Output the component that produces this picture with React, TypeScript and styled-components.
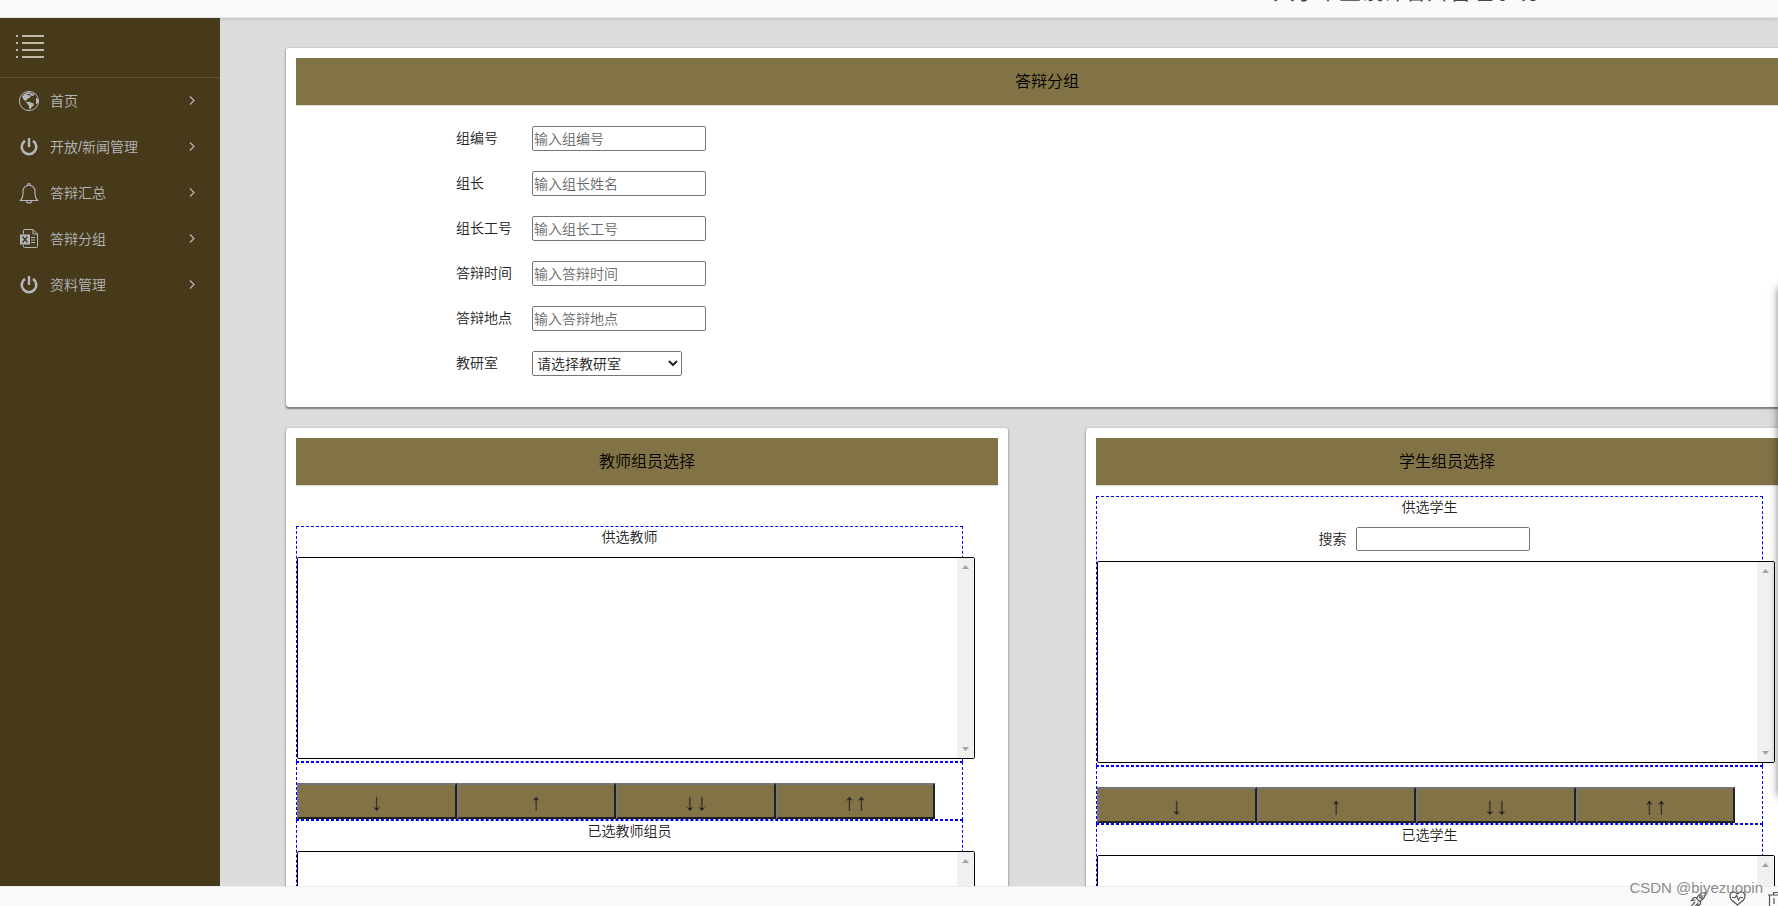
import React from 'react';
import styled, { createGlobalStyle } from 'styled-components';

const GlobalStyle = createGlobalStyle`
  * { box-sizing: border-box; }
  body {
    margin: 0;
    overflow: hidden;
    color: #222;
    font: 350 14px/20px "Liberation Sans", "Noto Sans CJK SC", sans-serif;
  }
  button, input, select { font: inherit; color: inherit; }
`;

const Page = styled.div`
  position: relative;
  display: flex;
  flex-direction: column;
  height: 100vh;
  overflow: hidden;
`;

const TopBar = styled.header`
  position: relative;
  z-index: 1;
  flex: none;
  display: flex;
  justify-content: center;
  align-items: flex-end;
  height: 18px;
  padding-left: 1032px;
  padding-bottom: 13px;
  background: linear-gradient(#fbfbfb, #f8f8f8);
  border-bottom: 1px solid #e4e4e4;
  box-shadow: 0 1px 4px rgba(0, 0, 0, 0.14);
`;

const SystemTitle = styled.h1`
  margin: 0;
  color: #444;
  font-size: 22px;
  font-weight: 400;
  line-height: 24px;
  white-space: nowrap;
`;

const Body = styled.div`
  flex: 1;
  display: flex;
  min-height: 0;
`;

const Sidebar = styled.nav`
  position: relative;
  z-index: 2;
  flex: none;
  width: 220px;
  background: #463a1a;
`;

const MenuToggle = styled.button`
  display: flex;
  width: 100%;
  height: 60px;
  padding: 16px;
  border: 0;
  border-bottom: 1px solid #5b5030;
  background: none;
`;

const MenuList = styled.ul`
  margin: 0;
  padding: 0;
  list-style: none;
`;

const MenuLink = styled.a`
  display: flex;
  align-items: center;
  gap: 10px;
  height: 46px;
  padding: 0 24px 0 18px;
  color: #b5b8bb;
  text-decoration: none;
  svg { flex: none; }
  span { flex: 1; }
`;

const Main = styled.main`
  flex: 1;
  min-width: 0;
  overflow: hidden;
  background: #dcdcdc;
`;

const Content = styled.div`
  display: flex;
  flex-direction: column;
  gap: 21px;
  margin: 30px -30px 0 66px;
`;

const Card = styled.section`
  padding: 10px;
  background: #fff;
  border-radius: 3px;
  box-shadow: 0 1px 2px 1px rgba(0, 0, 0, 0.22), 0 2px 1px rgba(0, 0, 0, 0.25);
`;

const CardTitle = styled.h2`
  display: flex;
  align-items: center;
  justify-content: center;
  height: 48px;
  margin: 0;
  color: #000;
  background: #817345;
  border-bottom: 1px solid #ddd;
  font-size: 16px;
  font-weight: 350;
`;

const Form = styled.form`
  display: flex;
  flex-direction: column;
  gap: 20px;
  padding: 20px 0 21px 160px;
`;

const Field = styled.div`
  display: flex;
  height: 25px;
  label { width: 76px; line-height: 24px; }
`;

const TextInput = styled.input`
  width: 174px;
  height: 25px;
  padding: 1px;
  background: #fff;
  border: 1px solid #767676;
  border-radius: 2px;
  &::placeholder { color: #696969; opacity: 1; }
`;

const Dropdown = styled.select`
  width: 150px;
  height: 25px;
  padding: 0;
  background: #fff;
  border: 1px solid #767676;
  border-radius: 2px;
`;

const Columns = styled.div`
  display: grid;
  grid-template-columns: 1fr 1fr;
  gap: 78px;
`;

const Picker = styled.div<{ $spaced?: boolean }>`
  width: 95%;
  margin-top: ${(p) => (p.$spaced ? 40 : 10)}px;
`;

const Dashed = styled.div`
  padding-bottom: 2px;
  border: 1px dashed #00f;
`;

const ListLabel = styled.label`
  display: block;
  height: 30px;
  text-align: center;
`;

const SearchRow = styled.div`
  display: flex;
  align-items: center;
  justify-content: center;
  margin-bottom: 10px;
  input { height: 24px; margin: 0 10px; }
`;

const ListFrame = styled.div`
  position: relative;
  display: flex;
  width: 102%;
  height: 202px;
  background: #fff;
  border: 1px solid #000;
  border-radius: 2px;
`;

const List = styled.select`
  flex: 1;
  padding: 0;
  background: #fff;
  border: 0;
  overflow: hidden;
`;

const ScrollTrack = styled.div`
  display: flex;
  flex-direction: column;
  justify-content: space-between;
  align-items: center;
  width: 17px;
  padding: 7px 0;
  background: #f0f0f0;
`;

const MoveBar = styled.div`
  display: flex;
  padding-top: 20px;
  border: 1px dashed #00f;
`;

const MoveButton = styled.button`
  width: 24%;
  height: 36px;
  padding: 2px 0 0;
  background: #817345;
  border: 2px solid;
  border-color: #767676 #212121 #212121 #767676;
  font-size: 24px;
  line-height: 28px;
`;

const SidePanel = styled.aside`
  position: absolute;
  z-index: 3;
  top: 288px;
  left: 100%;
  width: 200px;
  height: 508px;
  box-shadow: 0 0 8px rgba(0, 0, 0, 0.5);
`;

const Footer = styled.footer`
  flex: none;
  display: flex;
  justify-content: flex-end;
  gap: 22px;
  height: 20px;
  padding-top: 4px;
  margin-right: -7px;
  background: #f9f9f9;
  border-top: 1px solid #eee;
  svg { flex: none; }
`;

const Watermark = styled.div`
  position: absolute;
  z-index: 4;
  right: 15px;
  bottom: 8px;
  color: rgba(110, 110, 110, 0.8);
  font-size: 15px;
  font-weight: 400;
`;

const stroke = { fill: 'none', stroke: '#b5b8bb' } as const;

const GlobeIcon = () => (
  <svg width="22" height="22" viewBox="0 0 22 22" aria-hidden="true">
    <circle cx="11" cy="11" r="9.6" {...stroke} strokeWidth="1" />
    <path fill="#b5b8bb" d="M4 6.500 7 3.500 10 2l3 1 3.500 1-1 2-2-.5-1.500 2-2 1-1.500 2-1.800-.5 2 2 2.500-.3 4.800 2-.5 2-2 1.500-1.500 2.500-1-1.500V16l-1.500-2L8 12 5.500 9.500z" />
    <path d="M18.500 8v6M19.500 9v4" {...stroke} />
    <path d="m9 4.500 4 .5" stroke="#463a1a" />
  </svg>
);

const PowerIcon = () => (
  <svg width="22" height="22" viewBox="0 0 22 22" aria-hidden="true">
    <path d="M7 4.800a7.300 7.300 0 1 0 8 0" {...stroke} strokeWidth="2.600" />
    <path d="M11 2v9" {...stroke} strokeWidth="2.400" />
  </svg>
);

const BellIcon = () => (
  <svg width="22" height="22" viewBox="0 0 22 22" aria-hidden="true">
    <path d="M9.500 3.200a1.500 1.700 0 0 1 3 0M2.500 18.500C4.500 16.500 5 15 5 12V9a6 5.700 0 0 1 12 0v3c0 3 .5 4.500 2.500 6.500zM8.500 19a2.500 2 0 0 0 5 0" {...stroke} strokeWidth="1.100" />
  </svg>
);

const SheetIcon = () => (
  <svg width="22" height="22" viewBox="0 0 22 22" aria-hidden="true">
    <path d="M5.500 6V2.500q0-1 1-1H15l4.500 4.500v12.500q0 1-1 1h-12q-1 0-1-1V17M15 1.500V6h4.500M13 9.500h4M13 12h4M13 14.500h4" {...stroke} />
    <path fill="#b5b8bb" d="M2 6.500h10v10H2z" />
    <path d="m4.500 8.500 5 6m0-6-5 6" stroke="#463a1a" strokeWidth="1.400" />
  </svg>
);

const Chevron = () => (
  <svg width="8" height="12" viewBox="0 0 8 12" aria-hidden="true">
    <path d="m2 1.500 4 4-4 4" {...stroke} strokeWidth="1.200" />
  </svg>
);

const HamburgerIcon = () => (
  <svg width="28" height="24" viewBox="0 0 28 24" aria-hidden="true" fill="#bdb8a8">
    {[1, 8, 15, 22].map((y) => (
      <React.Fragment key={y}>
        <rect x="0" y={y} width="2" height="2" />
        <rect x="6" y={y} width="22" height="2" />
      </React.Fragment>
    ))}
  </svg>
);

const RocketIcon = () => (
  <svg width="17" height="17" viewBox="0 0 17 17" fill="none" stroke="#555" strokeWidth="1.200" aria-hidden="true">
    <path d="M15.500 1.500c-4 0-7 2-9 6L9.500 10.500c4-2 6-5 6-9zM7 6.500H4L1.500 9.500l4-.5M10.500 10v3l-3 2.500.5-4M5 11l-3.500 4M7 13l-2 2.500" />
    <circle cx="11" cy="6" r="1.300" />
  </svg>
);

const HeartIcon = () => (
  <svg width="17" height="17" viewBox="0 0 17 17" fill="none" stroke="#555" strokeWidth="1.200" aria-hidden="true">
    <path d="M8.500 14 2.500 9C-.5 5 1.500 1 4.500 1c2 0 3 .5 4 2C9.500 1.500 10.500 1 12.500 1c3 0 5 4 2 8z" />
    <path d="M3 6.500h3l1.500-2 2 4.500 1.500-2.500h3" />
  </svg>
);

const TrashIcon = () => (
  <svg width="17" height="17" viewBox="0 0 17 17" fill="none" stroke="#555" strokeWidth="1.200" aria-hidden="true">
    <path d="M0 4h17M5.500 4V1.500h6V4M1.500 4v12h14V4M6 7v6M11 7v6" />
  </svg>
);

const Triangle = ({ down }: { down?: boolean }) => (
  <svg width="7" height="4" viewBox="0 0 7 4" aria-hidden="true">
    <path d={down ? 'M0 0h7L3.500 4z' : 'M0 4h7L3.500 0z'} fill="#a3a3a3" />
  </svg>
);

const menu = [
  { text: '首页', Icon: GlobeIcon },
  { text: '开放/新闻管理', Icon: PowerIcon },
  { text: '答辩汇总', Icon: BellIcon },
  { text: '答辩分组', Icon: SheetIcon },
  { text: '资料管理', Icon: PowerIcon },
];

const fields = [
  { id: 'group-no', label: '组编号', hint: '输入组编号' },
  { id: 'leader', label: '组长', hint: '输入组长姓名' },
  { id: 'leader-no', label: '组长工号', hint: '输入组长工号' },
  { id: 'time', label: '答辩时间', hint: '输入答辩时间' },
  { id: 'place', label: '答辩地点', hint: '输入答辩地点' },
];

const ListBox = ({ id }: { id: string }) => (
  <ListFrame>
    <List id={id} multiple />
    <ScrollTrack>
      <Triangle />
      <Triangle down />
    </ScrollTrack>
  </ListFrame>
);

interface MemberPickerProps {
  id: string;
  title: string;
  available: string;
  chosen: string;
  searchable?: boolean;
}

const MemberPicker = ({ id, title, available, chosen, searchable }: MemberPickerProps) => (
  <Card>
    <CardTitle>{title}</CardTitle>
    <Picker $spaced={!searchable}>
      <Dashed>
        <ListLabel htmlFor={`${id}-from`}>{available}</ListLabel>
        {searchable && (
          <SearchRow>
            <label htmlFor={`${id}-search`}>搜索</label>
            <TextInput id={`${id}-search`} type="text" />
          </SearchRow>
        )}
        <ListBox id={`${id}-from`} />
      </Dashed>
      <MoveBar>
        {['↓', '↑', '↓↓', '↑↑'].map((arrow) => (
          <MoveButton key={arrow} type="button">{arrow}</MoveButton>
        ))}
      </MoveBar>
      <Dashed>
        <ListLabel htmlFor={`${id}-to`}>{chosen}</ListLabel>
        <ListBox id={`${id}-to`} />
      </Dashed>
    </Picker>
  </Card>
);

export default function App() {
  return (
    <Page>
      <GlobalStyle />
      <TopBar>
        <SystemTitle>大学毕业设计答辩管理系统</SystemTitle>
      </TopBar>
      <Body>
        <Sidebar>
          <MenuToggle type="button" aria-label="菜单">
            <HamburgerIcon />
          </MenuToggle>
          <MenuList>
            {menu.map(({ text, Icon }) => (
              <li key={text}>
                <MenuLink href="#">
                  <Icon />
                  <span>{text}</span>
                  <Chevron />
                </MenuLink>
              </li>
            ))}
          </MenuList>
        </Sidebar>
        <Main>
          <Content>
            <Card>
              <CardTitle>答辩分组</CardTitle>
              <Form>
                {fields.map((f) => (
                  <Field key={f.id}>
                    <label htmlFor={f.id}>{f.label}</label>
                    <TextInput id={f.id} type="text" placeholder={f.hint} />
                  </Field>
                ))}
                <Field>
                  <label htmlFor="office">教研室</label>
                  <Dropdown id="office">
                    <option>请选择教研室</option>
                  </Dropdown>
                </Field>
              </Form>
            </Card>
            <Columns>
              <MemberPicker id="teacher" title="教师组员选择" available="供选教师" chosen="已选教师组员" />
              <MemberPicker id="student" title="学生组员选择" available="供选学生" chosen="已选学生" searchable />
            </Columns>
          </Content>
        </Main>
      </Body>
      <Footer>
        <RocketIcon />
        <HeartIcon />
        <TrashIcon />
      </Footer>
      <SidePanel />
      <Watermark>CSDN @biyezuopin</Watermark>
    </Page>
  );
}
